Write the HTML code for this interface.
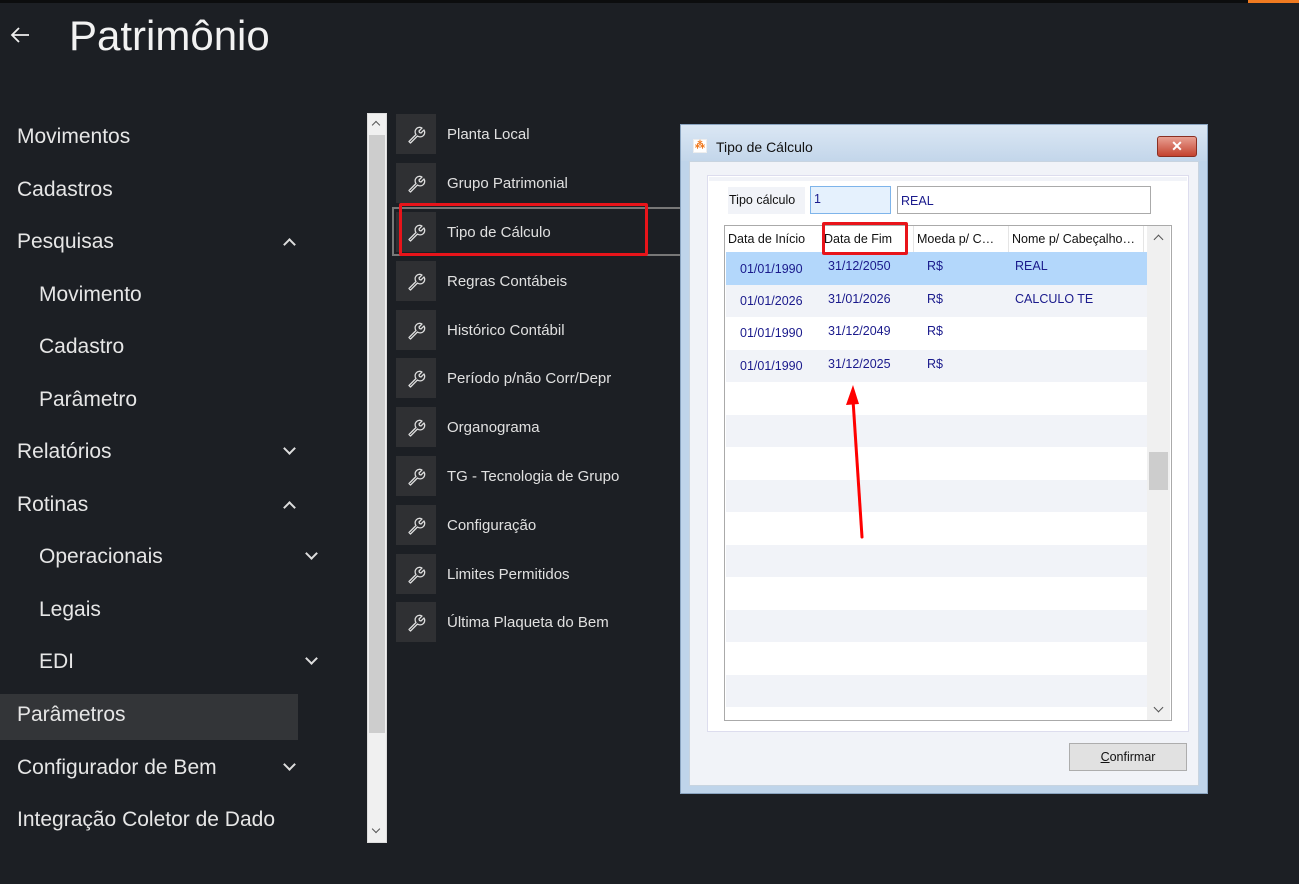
<!DOCTYPE html>
<html><head><meta charset="utf-8"><style>
*{margin:0;padding:0;box-sizing:border-box}
body{width:1299px;height:884px;background:#1c1f24;position:relative;overflow:hidden;font-family:"Liberation Sans",sans-serif;color:#e8e8e8}
.abs{position:absolute}
.side{position:absolute;left:17px;font-size:21px;color:#e6e6e6;line-height:24px}
.chev{position:absolute;width:9px;height:9px;border-left:2px solid #ddd;border-top:2px solid #ddd}
.up{transform:rotate(45deg)}
.dn{transform:rotate(225deg)}
.ico{position:absolute;left:396px;width:40px;height:40px;background:#2f3033}
.ico svg{position:absolute;left:10px;top:10px}
.lt{position:absolute;left:447px;font-size:15px;color:#e0e0e0}
.row{position:absolute;left:726px;width:421px;height:32.5px;font-size:12.5px;color:#1a1a8c}
.row span{position:absolute;top:9px}
</style></head><body>
<svg width="0" height="0" style="position:absolute"><defs><symbol id="w" viewBox="0 0 20 20"><path d="M3 17.5L10 10.5A4.5 4.5 0 0 1 16 4L13 7L13.5 8.5L15 9L18 6A4.5 4.5 0 0 1 11.5 12L4.5 19Z" stroke="#ddd" stroke-width="1.3" fill="none" stroke-linejoin="round"/></symbol></defs></svg>
<div class="abs" style="left:0;top:0;width:1299px;height:3px;background:#0c0d0e"></div>
<div class="abs" style="left:1248px;top:0;width:51px;height:3px;background:#f07a20"></div>
<svg class="abs" style="left:9px;top:24px" width="22" height="22" viewBox="0 0 22 22"><path d="M20 11H3M10 4L3 11L10 18" stroke="#eee" stroke-width="1.8" fill="none"/></svg>
<div class="abs" style="left:69px;top:12px;font-size:42px;color:#f2f2f2">Patrimônio</div>

<div class="side" style="top:125px">Movimentos</div>
<div class="side" style="top:178px">Cadastros</div>
<div class="side" style="top:230px">Pesquisas</div><div class="chev up" style="left:285px;top:240px"></div>
<div class="side" style="top:283px;left:39px">Movimento</div>
<div class="side" style="top:335px;left:39px">Cadastro</div>
<div class="side" style="top:388px;left:39px">Parâmetro</div>
<div class="side" style="top:440px">Relatórios</div><div class="chev dn" style="left:285px;top:444px"></div>
<div class="side" style="top:493px">Rotinas</div><div class="chev up" style="left:285px;top:503px"></div>
<div class="side" style="top:545px;left:39px">Operacionais</div><div class="chev dn" style="left:307px;top:549px"></div>
<div class="side" style="top:598px;left:39px">Legais</div>
<div class="side" style="top:650px;left:39px">EDI</div><div class="chev dn" style="left:307px;top:654px"></div>
<div class="abs" style="left:0;top:694px;width:298px;height:46px;background:#333538"></div>
<div class="side" style="top:703px">Parâmetros</div>
<div class="side" style="top:756px">Configurador de Bem</div><div class="chev dn" style="left:285px;top:760px"></div>
<div class="side" style="top:808px">Integração Coletor de Dado</div>

<div class="abs" style="left:367px;top:113px;width:20px;height:730px;background:#f0f0f0;border:1px solid #ddd"></div>
<div class="abs" style="left:369px;top:135px;width:16px;height:598px;background:#cdcdcd"></div>
<div class="chev up" style="left:373px;top:122px;width:6px;height:6px;border-color:#555;border-width:1.5px"></div>
<div class="chev dn" style="left:373px;top:826px;width:6px;height:6px;border-color:#555;border-width:1.5px"></div>

<div class="abs" style="left:392px;top:207px;width:290px;height:49px;border:2px solid #777;border-right:none"></div>

<div class="ico" style="top:114px"><svg width="20" height="20"><use href="#w"/></svg></div><div class="lt" style="top:126px">Planta Local</div>
<div class="ico" style="top:163px"><svg width="20" height="20"><use href="#w"/></svg></div><div class="lt" style="top:175px">Grupo Patrimonial</div>
<div class="ico" style="top:212px"><svg width="20" height="20"><use href="#w"/></svg></div><div class="lt" style="top:224px">Tipo de Cálculo</div>
<div class="ico" style="top:261px"><svg width="20" height="20"><use href="#w"/></svg></div><div class="lt" style="top:273px">Regras Contábeis</div>
<div class="ico" style="top:310px"><svg width="20" height="20"><use href="#w"/></svg></div><div class="lt" style="top:322px">Histórico Contábil</div>
<div class="ico" style="top:358px"><svg width="20" height="20"><use href="#w"/></svg></div><div class="lt" style="top:370px">Período p/não Corr/Depr</div>
<div class="ico" style="top:407px"><svg width="20" height="20"><use href="#w"/></svg></div><div class="lt" style="top:419px">Organograma</div>
<div class="ico" style="top:456px"><svg width="20" height="20"><use href="#w"/></svg></div><div class="lt" style="top:468px">TG - Tecnologia de Grupo</div>
<div class="ico" style="top:505px"><svg width="20" height="20"><use href="#w"/></svg></div><div class="lt" style="top:517px">Configuração</div>
<div class="ico" style="top:554px"><svg width="20" height="20"><use href="#w"/></svg></div><div class="lt" style="top:566px">Limites Permitidos</div>
<div class="ico" style="top:602px"><svg width="20" height="20"><use href="#w"/></svg></div><div class="lt" style="top:614px">Última Plaqueta do Bem</div>
<div class="abs" style="left:399px;top:203px;width:249px;height:53px;border:3px solid #e8141a;border-radius:2px"></div>

<div class="abs" style="left:680px;top:124px;width:528px;height:670px;background:#bfd4ea;border:1px solid #8aa4c0"></div>
<div class="abs" style="left:681px;top:125px;width:526px;height:36px;background:linear-gradient(#dbe7f4,#c3d6ea)"></div>
<div class="abs" style="left:693px;top:139px;width:14px;height:14px;background:#fff;border:1px solid #eee;color:#f07a20;font-size:10px;line-height:12px;text-align:center;font-weight:bold">⁂</div>
<div class="abs" style="left:716px;top:139px;font-size:14px;color:#111">Tipo de Cálculo</div>
<div class="abs" style="left:1157px;top:136px;width:40px;height:21px;background:linear-gradient(#e8a093,#c4432f);border:1px solid #8a2f22;border-radius:3px;color:#fff;font-size:14px;font-weight:bold;text-align:center;line-height:19px">✕</div>
<div class="abs" style="left:689px;top:161px;width:510px;height:625px;background:#f1f3f8;border:1px solid #c8d4e0"></div>
<div class="abs" style="left:707px;top:175px;width:482px;height:557px;background:#fff;border:1px solid #dde"></div>
<div class="abs" style="left:709px;top:177px;width:478px;height:4px;background:#f1f3f8"></div>
<div class="abs" style="left:728px;top:187px;width:77px;height:27px;background:#f1f3f8"></div>
<div class="abs" style="left:729px;top:193px;font-size:12.5px;color:#111">Tipo cálculo</div>
<div class="abs" style="left:810px;top:186px;width:81px;height:28px;background:#e5f1fd;border:1px solid #7eb4ea;font-size:12.5px;color:#1a1a8c;padding:5px 3px">1</div>
<div class="abs" style="left:897px;top:186px;width:254px;height:28px;background:#fff;border:1px solid #aaa;font-size:12.5px;color:#1a1a8c;padding:7px 3px">REAL</div>

<div class="abs" style="left:724px;top:225px;width:448px;height:496px;background:#fff;border:1px solid #aaa"></div>
<div class="abs" style="left:1147px;top:226px;width:23px;height:494px;background:#f0f0f0"></div>
<div class="abs" style="left:1149px;top:452px;width:19px;height:38px;background:#cdcdcd"></div>
<div class="chev up" style="left:1155px;top:236px;width:7px;height:7px;border-color:#555;border-width:1.5px"></div>
<div class="chev dn" style="left:1155px;top:704px;width:7px;height:7px;border-color:#555;border-width:1.5px"></div>
<div class="abs" style="left:726px;top:226px;width:421px;height:26px;font-size:12.5px;color:#111">
<span class="abs" style="left:2px;top:6px">Data de Início</span>
<span class="abs" style="left:98px;top:6px">Data de Fim</span>
<span class="abs" style="left:191px;top:6px">Moeda p/ C…</span>
<span class="abs" style="left:286px;top:6px">Nome p/ Cabeçalho…</span>
<span class="abs" style="left:187px;top:0;width:1px;height:26px;background:#e5e5e5"></span>
<span class="abs" style="left:282px;top:0;width:1px;height:26px;background:#e5e5e5"></span>
<span class="abs" style="left:417px;top:0;width:1px;height:26px;background:#e5e5e5"></span>
</div>
<div class="row" style="top:252px;background:#b3d7fb"><span style="left:14px;top:10px">01/01/1990</span><span style="left:102px;top:7px">31/12/2050</span><span style="left:201px;top:7px">R$</span><span style="left:289px;top:7px">REAL</span></div>
<div class="row" style="top:284.5px;background:#f1f3f8"><span style="left:14px">01/01/2026</span><span style="left:102px;top:7px">31/01/2026</span><span style="left:201px;top:7px">R$</span><span style="left:289px;top:7px">CALCULO TE</span></div>
<div class="row" style="top:317px"><span style="left:14px">01/01/1990</span><span style="left:102px;top:7px">31/12/2049</span><span style="left:201px;top:7px">R$</span></div>
<div class="row" style="top:349.5px;background:#f1f3f8"><span style="left:14px">01/01/1990</span><span style="left:102px;top:7px">31/12/2025</span><span style="left:201px;top:7px">R$</span></div>
<div class="row" style="top:414.5px;background:#f1f3f8"></div>
<div class="row" style="top:479.5px;background:#f1f3f8"></div>
<div class="row" style="top:544.5px;background:#f1f3f8"></div>
<div class="row" style="top:609.5px;background:#f1f3f8"></div>
<div class="row" style="top:674.5px;background:#f1f3f8"></div>
<div class="abs" style="left:822px;top:222px;width:86px;height:33px;border:3px solid #e8141a;border-radius:2px"></div>
<div class="abs" style="left:1069px;top:743px;width:118px;height:28px;background:#e1e1e1;border:1px solid #adadad;font-size:12.5px;color:#111;text-align:center;line-height:26px"><u>C</u>onfirmar</div>

<svg class="abs" style="left:0;top:0" width="1299" height="884">
<line x1="862" y1="537" x2="853" y2="400" stroke="#f00" stroke-width="3" stroke-linecap="round"/>
<polygon points="853,385 846,405 859,404" fill="#f00"/>
</svg>
</body></html>
